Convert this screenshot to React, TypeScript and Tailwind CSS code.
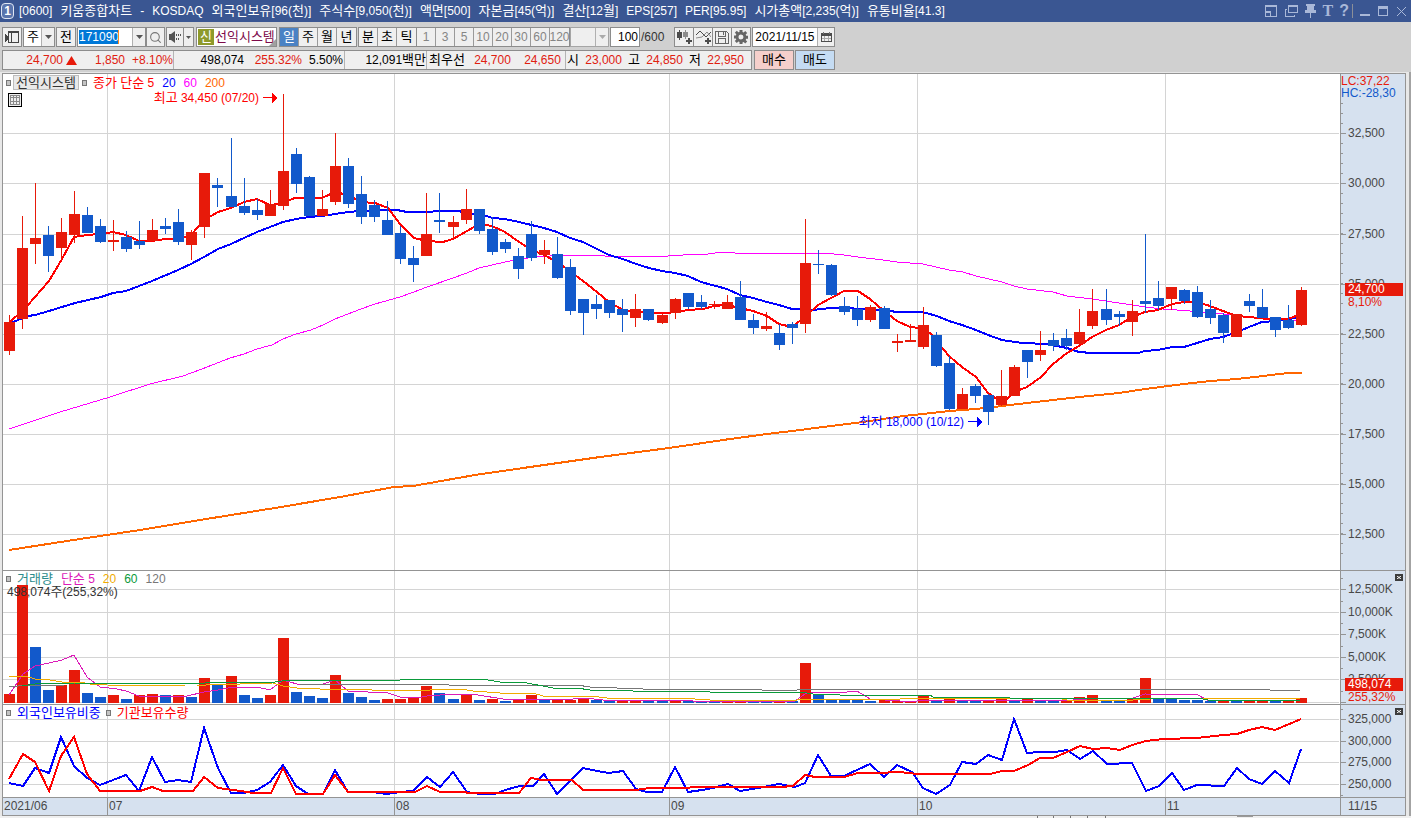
import { Search } from 'lucide-react';
import type React from 'react';

const RED = '#e71a0a';
const BLUE = '#1259cb';
const GRID = '#d4d4d4';

const PLOT_LEFT = 3;
const PLOT_WIDTH = 1337;

// [방향, 고가, 몸통 위, 몸통 아래, 저가, 거래량 방향, 거래량]
type Candle = [string, number, number, number, number, string, number];

const CANDLES: Candle[] = [
  ['u', 315, 322, 351, 355, 'u', 694],
  ['u', 216, 248, 319, 329, 'u', 585],
  ['u', 183, 238, 244, 264, 'd', 647],
  ['d', 226, 235, 256, 272, 'd', 690],
  ['u', 218, 232, 248, 260, 'u', 685],
  ['u', 191, 214, 235, 243, 'u', 670],
  ['d', 207, 215, 233, 233, 'd', 693],
  ['d', 219, 226, 242, 243, 'd', 697],
  ['u', 220, 240, 242, 251, 'u', 695],
  ['d', 231, 237, 249, 252, 'd', 699],
  ['d', 221, 241, 245, 249, 'u', 695],
  ['u', 219, 230, 241, 241, 'u', 694],
  ['d', 218, 226, 229, 234, 'd', 695],
  ['d', 209, 222, 242, 245, 'u', 695],
  ['u', 230, 232, 245, 260, 'd', 697],
  ['u', 173, 173, 227, 238, 'u', 678],
  ['d', 178, 185, 188, 207, 'd', 685],
  ['d', 138, 196, 207, 207, 'u', 676],
  ['d', 178, 206, 213, 215, 'd', 695],
  ['d', 199, 210, 215, 220, 'd', 698],
  ['u', 190, 204, 216, 216, 'u', 695],
  ['u', 94, 171, 206, 210, 'u', 638],
  ['d', 148, 154, 184, 193, 'd', 692],
  ['d', 176, 177, 216, 216, 'd', 696],
  ['u', 190, 209, 216, 216, 'd', 698],
  ['u', 133, 166, 202, 205, 'u', 675],
  ['d', 158, 166, 204, 208, 'd', 693],
  ['d', 176, 194, 217, 224, 'd', 697],
  ['d', 200, 205, 217, 222, 'd', 700],
  ['d', 201, 220, 235, 235, 'u', 699],
  ['d', 226, 233, 259, 264, 'u', 699],
  ['d', 246, 258, 265, 282, 'u', 697],
  ['u', 193, 234, 256, 256, 'u', 686],
  ['d', 193, 220, 222, 233, 'd', 693],
  ['u', 216, 222, 227, 239, 'd', 699],
  ['u', 189, 209, 220, 224, 'u', 695],
  ['d', 209, 209, 231, 234, 'd', 700],
  ['d', 217, 229, 252, 255, 'u', 699],
  ['d', 239, 242, 249, 253, 'd', 701],
  ['d', 248, 256, 269, 279, 'u', 699],
  ['d', 221, 234, 258, 261, 'u', 695],
  ['u', 240, 250, 255, 264, 'd', 700],
  ['d', 237, 254, 278, 279, 'u', 700],
  ['d', 259, 267, 311, 315, 'u', 700],
  ['d', 299, 299, 313, 335, 'u', 699],
  ['d', 295, 304, 309, 319, 'd', 700],
  ['d', 300, 300, 313, 318, 'd', 700],
  ['d', 299, 309, 315, 332, 'u', 701],
  ['u', 294, 309, 318, 327, 'u', 701],
  ['d', 309, 309, 320, 321, 'd', 701],
  ['u', 314, 315, 323, 324, 'd', 701],
  ['u', 298, 299, 313, 319, 'u', 700],
  ['d', 293, 293, 307, 309, 'd', 701],
  ['d', 295, 302, 307, 309, 'd', 701],
  ['u', 301, 304, 305, 309, 'd', 701],
  ['u', 295, 302, 309, 309, 'u', 701],
  ['d', 281, 297, 320, 320, 'u', 701],
  ['d', 314, 320, 328, 334, 'd', 701],
  ['u', 312, 326, 329, 331, 'd', 701],
  ['d', 324, 333, 345, 350, 'u', 701],
  ['d', 322, 324, 328, 344, 'd', 701],
  ['u', 219, 263, 324, 333, 'u', 663],
  ['d', 250, 264, 265, 274, 'd', 695],
  ['d', 264, 265, 295, 296, 'd', 699],
  ['d', 297, 306, 312, 315, 'd', 700],
  ['d', 296, 309, 320, 326, 'd', 700],
  ['u', 305, 307, 320, 322, 'd', 701],
  ['d', 306, 308, 329, 329, 'u', 700],
  ['u', 334, 341, 343, 352, 'u', 701],
  ['u', 324, 340, 342, 342, 'u', 701],
  ['u', 307, 325, 347, 349, 'u', 696],
  ['d', 332, 335, 366, 367, 'd', 701],
  ['d', 356, 363, 409, 410, 'u', 699],
  ['u', 388, 394, 409, 409, 'd', 700],
  ['d', 384, 386, 396, 403, 'd', 701],
  ['d', 394, 395, 412, 425, 'u', 700],
  ['u', 370, 396, 405, 406, 'u', 699],
  ['u', 365, 367, 396, 396, 'd', 700],
  ['d', 350, 350, 362, 378, 'u', 699],
  ['u', 331, 350, 355, 361, 'd', 700],
  ['d', 333, 340, 346, 351, 'd', 700],
  ['d', 329, 338, 346, 350, 'u', 700],
  ['u', 309, 332, 344, 344, 'u', 697],
  ['u', 289, 311, 326, 329, 'u', 695],
  ['d', 289, 309, 320, 325, 'd', 700],
  ['d', 311, 314, 317, 326, 'd', 700],
  ['u', 300, 311, 322, 336, 'u', 698],
  ['d', 234, 301, 304, 313, 'u', 678],
  ['d', 281, 298, 306, 310, 'd', 699],
  ['u', 287, 287, 299, 310, 'd', 699],
  ['d', 289, 290, 301, 304, 'd', 700],
  ['d', 286, 292, 317, 318, 'd', 700],
  ['d', 300, 309, 318, 324, 'd', 701],
  ['d', 313, 315, 333, 343, 'u', 700],
  ['u', 314, 314, 337, 337, 'd', 700],
  ['d', 294, 301, 306, 312, 'u', 700],
  ['d', 289, 307, 318, 318, 'u', 700],
  ['d', 317, 317, 330, 337, 'd', 701],
  ['d', 305, 320, 328, 329, 'u', 700],
  ['u', 287, 290, 325, 326, 'u', 698],
];

const PRICE_MA5 =
  '10,322 22,311 28,305 49,281 62,259 74,237 87,235 100,234 113,232 126,235 139,241 152,241 165,239 182,238 191,235 204,220 218,212 231,208 244,202 257,199 270,205 278,204 295,198 322,198 335,192 348,195 361,202 375,203 388,208 400,224 414,238 427,241 443,242 453,239 467,231 479,224 492,226 505,232 519,242 532,250 544,255 557,262 570,271 583,281 597,292 609,302 623,310 636,312 653,313 668,313 688,310 703,309 714,306 727,305 740,308 753,311 767,316 779,324 792,327 805,317 818,305 831,298 844,291 858,291 870,299 883,310 897,321 910,327 920,328 930,333 949,356 962,367 976,377 988,393 997,399 1007,399 1014,392 1027,387 1041,377 1053,364 1067,353 1079,346 1092,337 1106,330 1119,325 1132,317 1145,312 1158,310 1172,304 1184,302 1197,302 1210,306 1223,311 1237,316 1249,317 1268,319 1288,319 1296,316 1301,316';
const PRICE_MA20 =
  '9,322 13,322 28,316 35,315 49,311 75,303 101,297 113,293 126,291 152,281 178,270 191,264 204,257 218,249 231,244 244,238 257,232 270,227 283,222 296,219 309,217 322,216 348,212 361,211 388,210 397,210 407,212 427,212 440,211 458,211 473,214 487,216 492,218 505,219 519,222 544,228 557,232 570,238 583,242 597,249 609,255 623,259 636,264 649,268 662,271 675,273 688,276 701,282 727,289 740,295 753,298 767,302 779,305 792,309 812,310 831,308 844,308 863,309 890,311 897,312 922,312 937,316 949,321 962,325 976,330 988,335 1002,340 1022,343 1047,344 1067,348 1079,352 1092,353 1138,353 1145,351 1158,350 1172,347 1184,347 1197,343 1210,339 1223,337 1237,332 1249,327 1262,322 1277,321 1288,319 1297,318';
const PRICE_MA60 =
  '9,429 60,412 110,397 150,384 183,376 202,369 230,358 244,354 257,349 272,345 283,339 296,334 311,330 323,325 335,319 361,309 375,304 400,297 414,292 427,287 453,278 467,273 479,268 505,262 519,259 537,257 563,255 602,255 605,256 668,256 683,255 708,254 723,252 735,253 823,253 844,255 858,257 883,260 897,262 923,264 949,270 963,272 976,276 1002,282 1014,286 1027,289 1053,292 1067,296 1092,299 1119,303 1145,307 1163,309 1190,311 1207,313 1223,314 1247,317 1270,319 1297,321';
const PRICE_MA200 =
  '9,550 80,539 140,530 200,520 281,507 340,497 394,487 413,486 475,475 530,467 600,457 669,448 730,439 767,434 792,431 831,426 863,422 903,416 923,414 949,411 976,409 1002,406 1027,403 1053,400 1079,397 1119,393 1145,389 1184,384 1210,381 1237,379 1263,376 1288,373 1302,373';

const VOLUME_MA5 =
  '9,695 23,674 35,666 49,663 62,660 74,655 87,677 100,687 117,689 126,691 139,696 187,696 204,692 218,690 233,687 257,687 270,690 283,680 297,684 323,684 335,680 348,691 388,693 400,697 417,698 427,696 440,695 465,694 478,695 503,699 573,699 585,698 603,700 683,700 693,701 795,701 805,694 817,692 847,692 857,691 870,699 900,701 917,701 923,700 1073,700 1087,699 1133,698 1145,694 1198,695 1207,700 1300,700';
const VOLUME_MA20 =
  '9,676 25,676 35,679 50,680 62,682 80,682 90,684 107,685 185,686 197,686 215,684 240,684 273,683 283,686 297,688 320,689 365,689 372,690 430,690 437,689 460,689 473,691 500,693 533,693 543,696 590,696 607,698 680,698 710,700 797,700 813,699 900,699 920,698 1057,698 1067,700 1133,700 1150,699 1300,698';
const VOLUME_MA60 =
  '22,686 35,684 75,683 205,683 215,682 275,682 290,680 400,680 408,679 482,679 500,682 522,682 553,688 577,688 590,690 627,690 633,691 707,691 710,692 800,692 813,694 840,695 930,695 933,697 1007,697 1010,698 1060,698 1203,699 1208,700 1300,700';
const VOLUME_MA120 =
  '9,687 18,686 65,685 300,685 310,684 447,684 449,685 577,685 590,687 613,687 617,688 640,688 643,689 758,689 762,690 797,690 800,689 1268,689 1270,690 1300,690';

const FOREIGN_RATIO =
  '9,783 23,786 35,768 49,773 61,737 74,766 87,778 100,785 113,780 126,775 139,791 152,757 165,782 178,780 191,782 204,728 218,768 231,793 244,793 257,790 270,782 283,765 296,786 308,794 323,794 335,770 348,792 373,792 387,794 400,792 413,791 427,777 440,787 453,772 467,792 480,794 495,794 505,790 520,786 533,786 544,774 557,794 583,768 597,771 609,773 623,771 636,789 647,792 662,792 675,767 688,792 702,790 713,788 728,784 740,791 758,788 779,784 795,787 805,783 818,755 831,776 844,776 870,764 884,777 897,765 912,772 923,788 936,794 950,785 962,762 976,764 988,755 1002,760 1014,719 1027,753 1040,752 1055,752 1067,750 1080,759 1093,751 1107,764 1132,763 1146,791 1159,786 1172,773 1184,790 1197,785 1224,786 1237,768 1249,779 1262,784 1275,771 1289,783 1301,749';
const INSTITUTION_HOLDING =
  '9,779 23,754 35,762 49,791 61,756 74,737 87,774 100,791 140,791 152,787 163,791 193,791 204,777 218,788 248,792 252,793 271,793 283,768 296,794 323,794 335,775 348,792 415,792 427,786 440,792 465,792 468,793 519,793 531,778 542,780 572,780 583,790 635,790 650,788 688,788 692,787 780,787 793,786 805,775 815,777 844,777 858,773 883,773 893,772 900,772 917,774 990,774 1002,771 1014,771 1028,765 1040,758 1053,758 1067,752 1080,746 1093,749 1107,748 1120,750 1132,745 1146,741 1163,739 1197,738 1223,735 1237,734 1249,730 1262,727 1275,730 1301,719';

const MONTHS = [
  { x: 107, label: '07' },
  { x: 394, label: '08' },
  { x: 669, label: '09' },
  { x: 917, label: '10' },
  { x: 1165, label: '11' },
];

const TITLE_PARTS = [
  '[0600]',
  '키움종합차트',
  '-',
  'KOSDAQ',
  '외국인보유[96(천)]',
  '주식수[9,050(천)]',
  '액면[500]',
  '자본금[45(억)]',
  '결산[12월]',
  'EPS[257]',
  'PER[95.95]',
  '시가총액[2,235(억)]',
  '유통비율[41.3]',
];

interface PaneSpec {
  top: number;
  height: number;
}

interface AxisTick {
  y: number;
  label: string;
}

const PRICE_PANE: PaneSpec = { top: 74, height: 496 };
const VOLUME_PANE: PaneSpec = { top: 571, height: 133 };
const HOLDING_PANE: PaneSpec = { top: 705, height: 92 };

const PRICE_TICKS: AxisTick[] = [
  { y: 133, label: '32,500' },
  { y: 183, label: '30,000' },
  { y: 234, label: '27,500' },
  { y: 284, label: '25,000' },
  { y: 334, label: '22,500' },
  { y: 384, label: '20,000' },
  { y: 434, label: '17,500' },
  { y: 484, label: '15,000' },
  { y: 534, label: '12,500' },
];
const VOLUME_TICKS: AxisTick[] = [
  { y: 589, label: '12,500K' },
  { y: 612, label: '10,000K' },
  { y: 634, label: '7,500K' },
  { y: 657, label: '5,000K' },
  { y: 679, label: '2,500K' },
  { y: 702, label: '' },
];
const HOLDING_TICKS: AxisTick[] = [
  { y: 719, label: '325,000' },
  { y: 741, label: '300,000' },
  { y: 762, label: '275,000' },
  { y: 784, label: '250,000' },
];

const PRICE_MINOR = Array.from({ length: 46 }, (_, i) => 103 + i * 10);
const VOLUME_MINOR = [578, 601, 623, 646, 668, 691];
const HOLDING_MINOR = [709, 731, 752, 774, 795];

// 봉 간격은 13px이고 약 17개마다 1px씩 밀린다
const candleX = (i: number) => 4 + 13 * i + Math.floor((i + 0.4) / 16.75);

const percentX = (x: number) => `${((x - PLOT_LEFT) / PLOT_WIDTH) * 100}%`;
const percentY = (pane: PaneSpec, y: number) =>
  `${((y - pane.top) / pane.height) * 100}%`;

/** 한글은 13px, 숫자와 영문은 12px로 나누어 표시 */
function Mixed({ children }: { children: string }) {
  return (
    <span className="whitespace-nowrap">
      {children.split(/([가-힣]+)/).map((part, i) =>
        /[가-힣]/.test(part) ? (
          <span key={i} className="text-[13px]">
            {part}
          </span>
        ) : (
          part
        ),
      )}
    </span>
  );
}

function Line({
  points,
  color,
  width = 1,
}: {
  points: string;
  color: string;
  width?: number;
}) {
  return <polyline points={points} fill="none" stroke={color} strokeWidth={width} />;
}

function Plot({
  pane,
  ticks,
  children,
}: {
  pane: PaneSpec;
  ticks: AxisTick[];
  children: React.ReactNode;
}) {
  return (
    <svg
      className="absolute inset-0 h-full w-full"
      viewBox={`${PLOT_LEFT} ${pane.top} ${PLOT_WIDTH} ${pane.height}`}
      preserveAspectRatio="none"
      shapeRendering="crispEdges"
      aria-hidden="true"
    >
      {ticks.map((t) => (
        <rect key={t.y} x={3} y={t.y} width={1336} height={1} fill={GRID} />
      ))}
      {MONTHS.map((m) => (
        <rect key={m.x} x={m.x} y={pane.top} width={1} height={pane.height} fill={GRID} />
      ))}
      {children}
    </svg>
  );
}

function Axis({
  pane,
  ticks,
  minor,
  closable,
  children,
}: {
  pane: PaneSpec;
  ticks: AxisTick[];
  minor: number[];
  closable?: boolean;
  children?: React.ReactNode;
}) {
  return (
    <div className="relative overflow-hidden border-b border-l border-[#949494] bg-[#d6e1ef] text-[#484848]">
      {minor.map((y) => (
        <span
          key={y}
          className="absolute left-0 h-px w-0.5 bg-[#949494]"
          style={{ top: percentY(pane, y) }}
        />
      ))}
      {ticks.map((t) => (
        <span
          key={t.y}
          className="absolute left-0 flex h-px items-center gap-0.5"
          style={{ top: percentY(pane, t.y) }}
        >
          <span className="h-px w-[5px] bg-[#949494]" />
          <span className="pb-0.5">{t.label}</span>
        </span>
      ))}
      {children}
      {closable && (
        <button
          aria-label="닫기"
          className="absolute right-0.5 top-[3px] flex h-[7px] w-2 items-center justify-center bg-[#3c3c3c] text-white"
        >
          <svg width="4" height="3" viewBox="0 0 4 3" aria-hidden="true">
            <path d="M0 0l4 3M4 0L0 3" stroke="currentColor" />
          </svg>
        </button>
      )}
    </div>
  );
}

function Marker() {
  return <span className="h-1.5 w-[5px] border border-[#777] bg-[#c4c4c4]" />;
}

function Arrow() {
  return (
    <svg width="16" height="11" viewBox="0 0 16 11" shapeRendering="crispEdges" aria-hidden="true">
      <path d="M0 5h10v1H0zM9 0l6 5.500L9 11z" fill="currentColor" />
    </svg>
  );
}

function DownArrow() {
  return (
    <svg width="7" height="4" viewBox="0 0 7 4" aria-hidden="true">
      <path d="M0 0h7L3.500 4z" fill="currentColor" />
    </svg>
  );
}

function ToolButton({
  label,
  className = '',
  children,
}: {
  label: string;
  className?: string;
  children: React.ReactNode;
}) {
  return (
    <button
      aria-label={label}
      className={`flex h-5 items-center justify-center border border-[#8c8c8c] bg-[#efefef] ${className}`}
    >
      {children}
    </button>
  );
}

function SegmentGroup({
  items,
  active,
  muted,
}: {
  items: string[];
  active?: string;
  muted?: boolean;
}) {
  return (
    <div
      className={`flex h-5 divide-x divide-[#9a9a9a] border border-[#8c8c8c] bg-[#efefef] ${muted ? 'text-[#858585]' : 'text-black'}`}
    >
      {items.map((item) => (
        <button
          key={item}
          className={`flex w-[19px] items-center justify-center ${item === active ? 'bg-[#4a82c4] text-white' : ''}`}
        >
          <Mixed>{item}</Mixed>
        </button>
      ))}
    </div>
  );
}

function TitleBar() {
  return (
    <header className="flex h-[22px] shrink-0 items-center bg-[#3a5692] pl-px pr-[5px] text-white">
      <span className="mr-[5px] flex h-4 w-[13px] shrink-0 items-center justify-center rounded-sm border border-[#dfe6f3] bg-[#5a75ad] font-bold">
        1
      </span>
      <h1 className="flex min-w-0 flex-1 items-center gap-2 overflow-hidden">
        {TITLE_PARTS.map((part) => (
          <Mixed key={part}>{part}</Mixed>
        ))}
      </h1>
      <div className="flex shrink-0 items-center text-[#a9b8d8]">
        <button aria-label="창 분리" className="mr-2">
          <svg width="12" height="12" viewBox="0 0 12 12" fill="none" stroke="currentColor" shapeRendering="crispEdges">
            <path d="M.5.500h11v11H.500zM0 1.500h12M.500 6.500h5v5M1 7.500h5" />
          </svg>
        </button>
        <button aria-label="창 복제" className="mr-[7px]">
          <svg width="13" height="12" viewBox="0 0 13 12" fill="none" stroke="currentColor" shapeRendering="crispEdges">
            <path d="M3.500.500h9v7h-9zM3 1.500h10M1.500 4.500h-1v7h9v-2" />
          </svg>
        </button>
        <button aria-label="고정" className="mr-[7px]">
          <svg width="11" height="14" viewBox="0 0 11 14" fill="currentColor" shapeRendering="crispEdges">
            <path d="M1 0h9v2H9v4h2v3H6v5H5V9H0V6h2V2H1z" />
          </svg>
        </button>
        <button
          aria-label="글꼴"
          className="mr-1.5 font-['Liberation_Serif',serif] text-base font-bold leading-4"
        >
          T
        </button>
        <button aria-label="도움말" className="mr-0.5 text-base font-bold leading-4">
          ?
        </button>
        <span className="ml-px mr-[7px] h-3.5 w-px bg-[#8b8f98]" />
        <button aria-label="최소화" className="mr-2">
          <svg width="10" height="11" viewBox="0 0 10 11" fill="currentColor">
            <path d="M0 8h10v2H0z" />
          </svg>
        </button>
        <button aria-label="최대화" className="mr-[9px]">
          <svg width="10" height="10" viewBox="0 0 10 10" fill="currentColor" fillRule="evenodd">
            <path d="M0 0h10v10H0zM1 3v6h8V3z" />
          </svg>
        </button>
        <button aria-label="닫기">
          <svg width="9" height="9" viewBox="0 0 9 9" stroke="currentColor">
            <path d="M0 0l9 9M9 0L0 9" />
          </svg>
        </button>
      </div>
    </header>
  );
}

function ControlRow() {
  return (
    <div className="flex h-5 items-center">
      <ToolButton label="패널 열기" className="w-5">
        <svg width="14" height="12" viewBox="0 0 14 12" fill="none" stroke="#444" shapeRendering="crispEdges">
          <path d="M3.500.500h10v11h-10zM3 1.500h11M6.500 2v9" />
          <path d="M0 3l5 4-5 4z" fill="#444" stroke="none" />
        </svg>
      </ToolButton>
      <div className="relative ml-px flex h-5 w-8 border border-[#8c8c8c] bg-white">
        <select aria-label="종류" className="w-full appearance-none pl-[3px] text-[13px] leading-[18px] outline-none">
          <option>주</option>
        </select>
        <span className="pointer-events-none absolute inset-y-0 right-0 flex w-[13px] items-center justify-center border-l border-[#b0b0b0] bg-[#efefef] text-[#555]">
          <DownArrow />
        </span>
      </div>
      <ToolButton label="전" className="ml-px w-5">
        <Mixed>전</Mixed>
      </ToolButton>
      <div className="ml-px flex h-5 w-[69px] items-center border border-[#8c8c8c] bg-white">
        <input
          aria-label="종목코드"
          defaultValue="171090"
          className="ml-px h-3.5 w-[39px] bg-[#0078d7] text-white outline-none"
        />
        <span className="h-3.5 w-px bg-[#ff8a1c]" />
        <button aria-label="종목 목록" className="ml-auto flex h-full w-[13px] items-center justify-center border-l border-[#b0b0b0] bg-[#efefef] text-[#555]">
          <DownArrow />
        </button>
      </div>
      <ToolButton label="검색" className="w-[19px] text-[#777]">
        <Search size={13} />
      </ToolButton>
      <ToolButton label="소리" className="ml-px w-[18px] text-[#555]">
        <svg width="12" height="12" viewBox="0 0 12 12" fill="currentColor">
          <path d="M0 3h2l4-3v12L2 9H0zM7 3h1v2H7zM9 3h1v2H9zM11 3h1v2h-1zM7 7h1v2H7zM9 7h1v2H9z" />
        </svg>
      </ToolButton>
      <ToolButton label="소리 설정" className="-ml-px w-[11px] text-[#555]">
        <svg width="5" height="3" viewBox="0 0 5 3" fill="currentColor">
          <path d="M0 0h5L2.500 3z" />
        </svg>
      </ToolButton>
      <div className="relative ml-0.5 flex h-5 w-[81px] items-center border border-[#8c8c8c] bg-white">
        <span className="ml-px flex h-4 w-4 items-center justify-center bg-[#8e9a2b] text-white">
          <Mixed>신</Mixed>
        </span>
        <span className="ml-px text-[#7d0a4a]">
          <Mixed>선익시스템</Mixed>
        </span>
        <svg className="absolute bottom-0 right-0" width="7" height="7" viewBox="0 0 7 7" aria-hidden="true">
          <path d="M7 0v7H0z" fill="#a0a0a0" />
        </svg>
      </div>
      <div className="ml-0.5">
        <SegmentGroup items={['일', '주', '월', '년']} active="일" />
      </div>
      <div className="ml-px">
        <SegmentGroup items={['분', '초', '틱']} />
      </div>
      <div className="-ml-px">
        <SegmentGroup items={['1', '3', '5', '10', '20', '30', '60', '120']} muted />
      </div>
      <div className="relative h-5 w-[39px] border border-[#a5a5a5] bg-[#efefef]">
        <select aria-label="분 주기" className="h-full w-full appearance-none" disabled />
        <span className="pointer-events-none absolute inset-y-0 right-0 flex w-[13px] items-center justify-center border-l border-[#b0b0b0] text-[#aaa]">
          <DownArrow />
        </span>
      </div>
      <label className="ml-px flex items-center text-[#333]">
        <input
          aria-label="조회 개수"
          defaultValue="100"
          className="mr-px h-5 w-[30px] border border-[#8c8c8c] bg-white pr-px text-right text-black outline-none"
        />
        /600
      </label>
      <div className="ml-2.5 flex text-[#4c4c4c]">
        <ToolButton label="봉 추가" className="w-5">
          <svg width="15" height="14" viewBox="0 0 15 14" fill="currentColor" shapeRendering="crispEdges">
            <path d="M0 2h5v6H0zM2 0h1v10H2zM11 8h2v2h2v2h-2v2h-2v-2H9v-2h2z" />
            <path d="M6 2h5v5H6zM8 0h1v9H8z" fill="#8c8c8c" />
          </svg>
        </ToolButton>
        <ToolButton label="지표 추가" className="-ml-px w-5">
          <svg width="15" height="14" viewBox="0 0 15 14" fill="none" stroke="currentColor">
            <path d="M0 5l4-4 6 6 5-5" />
            <path d="M0 8l6-1 5-5 4 5" stroke="#8c8c8c" />
            <path d="M11 8h2v2h2v2h-2v2h-2v-2H9v-2h2z" fill="currentColor" stroke="none" />
          </svg>
        </ToolButton>
        <ToolButton label="저장" className="-ml-px w-5">
          <svg width="14" height="13" viewBox="0 0 14 13" fill="none" stroke="#666" shapeRendering="crispEdges">
            <path d="M.500.500h11l2 2v10H.500zM3.500 1v4h7V1M8.500 1v3M3.500 12V7.500h7V12" />
          </svg>
        </ToolButton>
        <ToolButton label="설정" className="-ml-px w-5">
          <svg width="14" height="14" viewBox="0 0 14 14" fill="#666" fillRule="evenodd">
            <path d="M5.500 0h3v2l1.200.500 1.500-1.400 2 2-1.500 1.500.500 1.200h1.800v3h-1.800l-.500 1.200 1.500 1.500-2 2-1.500-1.500-1.200.500V14h-3v-2l-1.200-.500-1.500 1.500-2-2 1.500-1.500L1.800 8.500H0v-3h1.800l.500-1.200L.8 2.800l2-2 1.500 1.500L5.500 2zM7 4.500a2.500 2.500 0 100 5 2.500 2.500 0 000-5z" />
          </svg>
        </ToolButton>
      </div>
      <div className="ml-px flex h-5 border border-[#8c8c8c] bg-white">
        <input
          aria-label="조회일"
          defaultValue="2021/11/15"
          className="w-16 pl-0.5 text-black outline-none"
        />
        <button aria-label="달력" className="flex w-[17px] items-center justify-center border-l border-[#b0b0b0] bg-[#efefef]">
          <svg width="11" height="10" viewBox="0 0 11 10" shapeRendering="crispEdges">
            <path d="M0 1h11v3H0zM0 4h1v6H0zM10 4h1v6h-1zM0 9h11v1H0z" fill="#4c4c4c" />
            <path d="M1 6h9v1H1zM3 4h1v5H3zM7 4h1v5H7z" fill="#a8a8a8" />
            <path d="M2 0h1v2H2zM8 0h1v2H8z" fill="#777" />
          </svg>
        </button>
      </div>
    </div>
  );
}

function QuoteRow() {
  return (
    <div className="mt-[3px] flex h-5">
      <div className="flex items-stretch divide-x divide-[#b4b4b4] border border-[#8c8c8c] bg-[#efefef] leading-[18px] text-black">
        <div className="flex w-[171px] items-center text-[#e02010]">
          <span className="w-[60px] text-right">24,700</span>
          <svg className="ml-[3px]" width="11" height="9" viewBox="0 0 11 9" aria-hidden="true">
            <path d="M5.500 0L11 9H0z" fill="#e71a0a" />
          </svg>
          <span className="w-12 text-right">1,850</span>
          <span className="w-12 text-right">+8.10%</span>
        </div>
        <div className="flex w-[171px]">
          <span className="w-[70px] text-right">498,074</span>
          <span className="w-[58px] text-right text-[#e02010]">255.32%</span>
          <span className="w-[41px] text-right">5.50%</span>
        </div>
        <div className="w-[82px] text-right">
          <Mixed>12,091백만</Mixed>
        </div>
        <div className="flex w-[139px]">
          <span className="ml-0.5">
            <Mixed>최우선</Mixed>
          </span>
          <span className="w-[46px] text-right text-[#e02010]">24,700</span>
          <span className="w-[50px] text-right text-[#e02010]">24,650</span>
        </div>
        <div className="flex w-[185px] pl-px">
          <Mixed>시</Mixed>
          <span className="w-[43px] text-right text-[#e02010]">23,000</span>
          <span className="ml-[6px]">
            <Mixed>고</Mixed>
          </span>
          <span className="w-[43px] text-right text-[#e02010]">24,850</span>
          <span className="ml-[6px]">
            <Mixed>저</Mixed>
          </span>
          <span className="w-[43px] text-right text-[#e02010]">22,950</span>
        </div>
      </div>
      <button className="ml-0.5 w-10 border border-[#8c8c8c] bg-[#f5cfcb] text-black">
        <Mixed>매수</Mixed>
      </button>
      <button className="ml-px w-10 border border-[#8c8c8c] bg-[#c5dcf3] text-black">
        <Mixed>매도</Mixed>
      </button>
    </div>
  );
}

function PricePane() {
  return (
    <>
      <section aria-label="가격 차트" className="relative overflow-hidden border-b border-[#949494] bg-white">
        <Plot pane={PRICE_PANE} ticks={PRICE_TICKS}>
          <Line points={PRICE_MA200} color="#ff6600" width={2} />
          <Line points={PRICE_MA60} color="#ff00ff" />
          <Line points={PRICE_MA20} color="#0000ff" width={2} />
          <Line points={PRICE_MA5} color="#ff0000" width={2} />
          {CANDLES.map(([dir, high, top, bottom, low], i) => (
            <g key={i} fill={dir === 'u' ? RED : BLUE}>
              <rect x={candleX(i) + 5} y={high} width={1} height={low - high} />
              <rect x={candleX(i)} y={top} width={11} height={bottom - top} />
            </g>
          ))}
        </Plot>
        <div className="absolute left-[3px] top-px flex h-[15px] items-center">
          <Marker />
          <button className="ml-0.5 flex h-[15px] w-[66px] items-center justify-center border border-[#bdbdbd] bg-[#e9e9e9] text-[#333]">
            <Mixed>선익시스템</Mixed>
          </button>
          <span className="ml-[3px] flex items-center">
            <Marker />
          </span>
          <span className="ml-1.5 flex items-center gap-2 text-[#ff0000]">
            <Mixed>종가 단순 5</Mixed>
            <span className="text-[#0000ff]">20</span>
            <span className="text-[#ff00ff]">60</span>
            <span className="text-[#ff6600]">200</span>
          </span>
        </div>
        <button
          aria-label="데이터 표"
          className="absolute left-[5px] top-[19px] flex h-3.5 w-3.5 items-center justify-center border border-black bg-[#eee]"
        >
          <svg width="10" height="10" viewBox="0 0 10 10" fill="none" stroke="#8a8a8a" shapeRendering="crispEdges">
            <path d="M.500.500h9v9H.500zM3.500 0v10M6.500 0v10M0 2.500h10M0 6.500h10" />
          </svg>
        </button>
        <div
          className="absolute flex -translate-x-full -translate-y-1/2 items-center gap-1 text-[#ff0000]"
          style={{ left: percentX(279), top: percentY(PRICE_PANE, 98) }}
        >
          <Mixed>최고 34,450 (07/20)</Mixed>
          <Arrow />
        </div>
        <div
          className="absolute flex -translate-x-full -translate-y-1/2 items-center gap-1 text-[#0000ff]"
          style={{ left: percentX(984), top: percentY(PRICE_PANE, 422) }}
        >
          <Mixed>최저 18,000 (10/12)</Mixed>
          <Arrow />
        </div>
      </section>
      <Axis pane={PRICE_PANE} ticks={PRICE_TICKS} minor={PRICE_MINOR}>
        <div className="absolute left-0 top-px leading-3">
          <div className="text-[#e71a0a]">LC:37,22</div>
          <div className="text-[#1259cb]">HC:-28,30</div>
        </div>
        <div
          className="absolute left-1 right-0.5 leading-[13px]"
          style={{ top: percentY(PRICE_PANE, 283) }}
        >
          <div className="bg-[#e71a0a] pl-[3px] text-white">24,700</div>
          <div className="pl-[3px] leading-3 text-[#e71a0a]">8,10%</div>
        </div>
      </Axis>
    </>
  );
}

function VolumePane() {
  return (
    <>
      <section aria-label="거래량 차트" className="relative overflow-hidden border-b border-[#949494] bg-white">
        <Plot pane={VOLUME_PANE} ticks={VOLUME_TICKS}>
          {CANDLES.map(([, , , , , dir, top], i) => (
            <rect
              key={i}
              x={candleX(i)}
              y={top}
              width={11}
              height={703 - top}
              fill={dir === 'u' ? RED : BLUE}
            />
          ))}
          <Line points={VOLUME_MA5} color="#dc1ab8" />
          <Line points={VOLUME_MA20} color="#f0ab00" />
          <Line points={VOLUME_MA120} color="#777777" />
          <Line points={VOLUME_MA60} color="#0a9a3a" />
        </Plot>
        <div className="absolute left-[3px] top-0.5">
          <div className="flex h-3 items-center">
            <Marker />
            <span className="ml-1.5 flex items-center gap-2 leading-3 text-[#dc1ab8]">
              <span className="text-[#2b8c8c]">
                <Mixed>거래량</Mixed>
              </span>
              <Mixed>단순 5</Mixed>
              <span className="text-[#f0ab00]">20</span>
              <span className="text-[#0a9a3a]">60</span>
              <span className="text-[#777]">120</span>
            </span>
          </div>
          <div className="mt-px pl-px leading-3 text-[#333]">
            <Mixed>498,074주(255,32%)</Mixed>
          </div>
        </div>
      </section>
      <Axis pane={VOLUME_PANE} ticks={VOLUME_TICKS} minor={VOLUME_MINOR} closable>
        <div
          className="absolute left-1 right-0.5 leading-[13px]"
          style={{ top: percentY(VOLUME_PANE, 678) }}
        >
          <div className="bg-[#e71a0a] pl-[3px] text-white">498,074</div>
          <div className="pl-[3px] leading-3 text-[#e71a0a]">255,32%</div>
        </div>
      </Axis>
    </>
  );
}

function HoldingPane() {
  return (
    <>
      <section aria-label="보유 비중 차트" className="relative overflow-hidden border-b border-[#949494] bg-white">
        <Plot pane={HOLDING_PANE} ticks={HOLDING_TICKS}>
          <Line points={FOREIGN_RATIO} color="#0000ff" width={2} />
          <Line points={INSTITUTION_HOLDING} color="#ff0000" width={2} />
        </Plot>
        <div className="absolute left-[3px] top-0.5 flex h-3 items-center leading-3">
          <Marker />
          <span className="ml-1.5 text-[#0000ff]">
            <Mixed>외국인보유비중</Mixed>
          </span>
          <span className="ml-[5px] flex items-center">
            <Marker />
          </span>
          <span className="ml-1.5 text-[#ff0000]">
            <Mixed>기관보유수량</Mixed>
          </span>
        </div>
      </section>
      <Axis pane={HOLDING_PANE} ticks={HOLDING_TICKS} minor={HOLDING_MINOR} closable />
    </>
  );
}

function DateStrip() {
  return (
    <>
      <div className="relative border-b border-[#949494] bg-[#d6e1ef] leading-4 text-[#484848]">
        <span className="pl-px">2021/06</span>
        {MONTHS.map((m) => (
          <span
            key={m.x}
            className="absolute inset-y-0 border-l border-[#949494] pl-px"
            style={{ left: percentX(m.x) }}
          >
            {m.label}
          </span>
        ))}
      </div>
      <div className="border-b border-l border-[#949494] bg-[#d6e1ef] pl-[7px] leading-4 text-[#484848]">
        11/15
      </div>
    </>
  );
}

export default function App() {
  return (
    <div className="flex h-screen min-h-[600px] flex-col overflow-hidden bg-[#d0d0d0] font-['Liberation_Sans','Noto_Sans_CJK_KR',sans-serif] text-xs">
      <TitleBar />
      <div className="h-[50px] shrink-0 pl-0.5 pt-[5px]">
        <ControlRow />
        <QuoteRow />
      </div>
      <main className="flex min-h-0 flex-1 border-r-2 border-[#a3a3a3] bg-[#e8e8e8] pl-0.5 pr-[3px] pt-px">
        <div className="grid flex-1 grid-cols-[1fr_65px] grid-rows-[497fr_134fr_93fr_18px] border-l border-r border-t border-[#949494]">
          <PricePane />
          <VolumePane />
          <HoldingPane />
          <DateStrip />
        </div>
      </main>
      <footer className="flex h-0.5 shrink-0 justify-end bg-[#efefef] pr-[158px]">
        <div className="mr-[131px] flex divide-x divide-[#777] border-x border-[#777]">
          <span className="w-4" />
          <span className="w-[17px]" />
          <span className="w-[17px]" />
          <span className="w-[17px]" />
        </div>
        <span className="h-px w-4 bg-[#999]" />
      </footer>
    </div>
  );
}
